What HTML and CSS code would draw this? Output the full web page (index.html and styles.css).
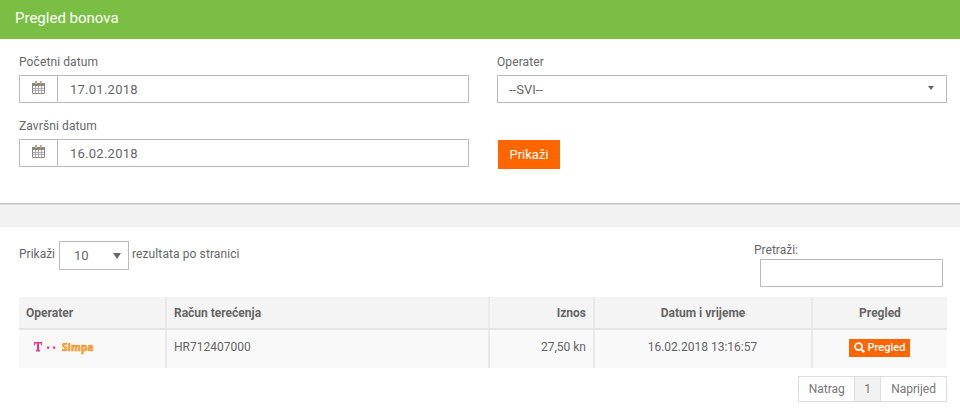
FILE: index.html
```html
<!DOCTYPE html>
<html lang="hr">
<head>
<meta charset="utf-8">
<title>Pregled bonova</title>
<link rel="stylesheet" href="styles.css">
</head>
<body>
<header class="title-bar">Pregled bonova</header>
<section class="filter-panel">
  <div class="filter-col">
    <div class="field">
      <label class="field-label">Početni datum</label>
      <div class="input-group">
        <span class="addon"><svg class="cal" viewBox="0 0 13 13" width="13" height="13"><path fill="none" stroke="#8f8a80" d="M.5 2.500h12v10H.5z"/><path fill="#8f8a80" d="M0 2h13v3H0z"/><path fill="#c9a57c" d="M3 0h2v3H3zM8 0h2v3H8z"/><path stroke="#a9a5ba" d="M3.500 5v7M6.500 5v7M9.500 5v7M1 7.500h11M1 9.500h11" fill="none"/></svg></span>
        <span class="input-value">17.01.2018</span>
      </div>
    </div>
    <div class="field">
      <label class="field-label">Završni datum</label>
      <div class="input-group">
        <span class="addon"><svg class="cal" viewBox="0 0 13 13" width="13" height="13"><path fill="none" stroke="#8f8a80" d="M.5 2.500h12v10H.5z"/><path fill="#8f8a80" d="M0 2h13v3H0z"/><path fill="#c9a57c" d="M3 0h2v3H3zM8 0h2v3H8z"/><path stroke="#a9a5ba" d="M3.500 5v7M6.500 5v7M9.500 5v7M1 7.500h11M1 9.500h11" fill="none"/></svg></span>
        <span class="input-value">16.02.2018</span>
      </div>
    </div>
  </div>
  <div class="filter-col">
    <div class="field">
      <label class="field-label">Operater</label>
      <div class="select-box"><span>--SVI--</span><i class="caret"></i></div>
    </div>
    <div class="action"><button class="btn-show">Prikaži</button></div>
  </div>
</section>
<div class="band"></div>
<main class="results">
  <div class="controls">
    <div class="length"><span>Prikaži</span><span class="length-select"><span>10</span><i class="caret-big"></i></span><span class="length-tail">rezultata po stranici</span></div>
    <div class="search"><label>Pretraži:</label><span class="search-input"></span></div>
  </div>
  <table class="data">
    <thead>
      <tr><th class="c1">Operater</th><th class="c2">Račun terećenja</th><th class="c3 right">Iznos</th><th class="c4">Datum i vrijeme</th><th class="c5">Pregled</th></tr>
    </thead>
    <tbody>
      <tr>
        <td class="logo-cell"><span class="logos"><svg width="22" height="10" viewBox="0 0 22 10"><path fill="#ee2f96" d="M0 0h8v3.500H7V1.500H5V8h1v1.500H2V8h1V1.500H1V3.500H0zM13 4.500h2.200v2.200H13zM19 4.500h2.200v2.200H19z"/></svg><span class="simpa">Simpa</span></span></td>
        <td>HR712407000</td>
        <td class="right">27,50 kn</td>
        <td class="center">16.02.2018 13:16:57</td>
        <td class="center"><a class="btn-view"><svg width="11" height="11" viewBox="0 0 11 11"><circle cx="4.600" cy="4.600" r="3.500" fill="none" stroke="#fff" stroke-width="1.800"/><path stroke="#fff" stroke-width="2.200" d="M7.200 7.200 10.300 10.300"/></svg>Pregled</a></td>
      </tr>
    </tbody>
  </table>
  <nav class="pager"><a class="prev">Natrag</a><a class="current">1</a><a>Naprijed</a></nav>
</main>
</body>
</html>
```
FILE: styles.css
```css
* { box-sizing: border-box; }
html, body { margin: 0; padding: 0; }
body { width: 960px; height: 411px; overflow: hidden; background: #fff; font-family: Roboto, "Liberation Sans", sans-serif; font-size: 12px; color: #666; }
.title-bar { height: 39px; background: #7abf43; color: #fff; font-size: 15px; line-height: 37px; padding-left: 15px; }
.filter-panel { height: 165px; display: flex; gap: 28px; padding: 15px 13px 0 19px; border-bottom: 1px solid #c6c6c6; }
.filter-col { width: 450px; display: flex; flex-direction: column; gap: 15px; }
.field-label { display: block; height: 21px; line-height: 16px; color: #666; letter-spacing: .1px; }
.input-group { display: flex; height: 28px; border: 1px solid #bbb; background: #fff; }
.addon { width: 38px; border-right: 1px solid #bbb; display: flex; justify-content: center; padding-top: 5px; }
.cal { display: block; }
.input-value { padding-left: 12px; font-size: 13px; line-height: 27px; letter-spacing: .25px; }
.select-box { height: 28px; border: 1px solid #bbb; padding-left: 11px; padding-right: 12px; display: flex; justify-content: space-between; align-items: center; color: #666; font-size: 13px; }
.caret { width: 0; height: 0; border: 3px solid transparent; border-top: 4px solid #666; border-bottom: 0; margin-bottom: 3px; }
.action { padding-top: 22px; }
.btn-show { display: block; width: 62px; height: 29px; margin-left: 1px; border: 0; padding: 0; background: #f60; color: #fff; font: 400 13px Roboto, sans-serif; }
.band { height: 23px; background: #f2f2f2; border-top: 1px solid #dcdcdc; }
.results { padding: 13px 13px 0 19px; }
.controls { height: 57px; display: flex; justify-content: space-between; }
.length { display: flex; height: 28px; align-items: center; gap: 4px; }
.length-tail { margin-left: -1px; letter-spacing: .1px; }
.length-select { width: 70px; height: 29px; margin-top: 3px; border: 1px solid #bbb; display: flex; align-items: center; justify-content: space-between; padding: 0 7px 0 14px; font-size: 13px; }
.caret-big { width: 0; height: 0; border: 4px solid transparent; border-top: 6px solid #666; border-bottom: 0; }
.search { width: 183px; margin-right: 4px; margin-top: 3px; }
.search label { display: block; margin-left: -6px; height: 15px; line-height: 15px; }
.search-input { display: block; width: 183px; height: 28px; border: 1px solid #bbb; margin-top: 1px; }
.data { width: 928px; border-collapse: collapse; table-layout: fixed; background: #f9f9f9; }
.data th { height: 32px; background: #f4f4f4; font-size: 12px; font-weight: 700; color: #666; border-bottom: 2px solid #e3e3e3; border-right: 2px solid #e9e9e9; text-align: center; padding: 0 7px; }
.data td { height: 39px; font-size: 12px; padding: 0 7px 5px; border-right: 2px solid #e9e9e9; color: #666; }
.data th:last-child, .data td:last-child { border-right: 0; }
.data th.c1, .data th.c2 { text-align: left; }
.c1 { width: 147px; }
.c2 { width: 323px; }
.c3 { width: 105px; }
.c4 { width: 218px; }
.c5 { width: 135px; }
.data .right { text-align: right; }
.center { text-align: center; }
.data td.logo-cell { padding: 0 0 4px 15px; }
.logos { display: flex; align-items: center; gap: 6px; }
.simpa { display: block; width: 32px; font: 700 10px/11px "Open Sans", sans-serif; letter-spacing: .2px; color: #fbb23f; -webkit-text-stroke: .6px #ee8a1c; }
.data td:nth-child(5) { padding-bottom: 3px; }
.data td:nth-child(4) { padding-right: 8px; }
.btn-view { display: inline-flex; align-items: center; gap: 3px; width: 61px; height: 18px; padding-left: 5px; background: #f60; color: #fff; font-size: 11px; font-weight: 500; margin-right: 2px; }
.pager { display: flex; justify-content: flex-end; margin-top: 8px; }
.pager a { height: 26px; line-height: 24px; padding: 0 10px; border: 1px solid #ddd; border-right: 0; font-size: 12px; color: #777; }
.pager a:last-child { border-right: 1px solid #ddd; }
.pager .prev { width: 56px; padding: 0; text-align: center; }
.pager .current { width: 26px; padding: 0; text-align: center; background: #f2f2f2; }
```
